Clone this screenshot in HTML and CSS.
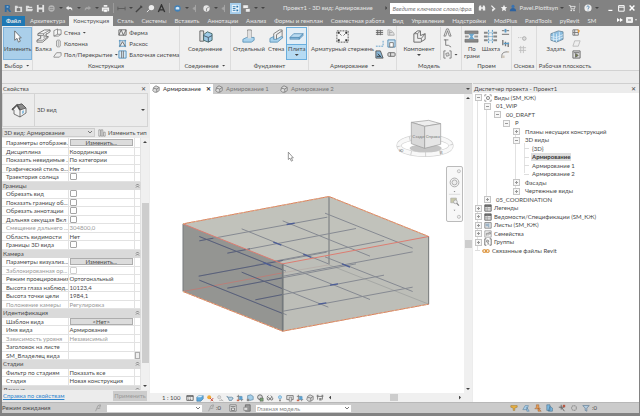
FILE: index.html
```
<!DOCTYPE html>
<html lang="ru">
<head>
    <meta charset="UTF-8">
    <meta name="viewport" content="width=device-width, initial-scale=1.0">
    <title>Проект1 - 3D вид: Армирование</title>
    <link rel="stylesheet" href="styles.css">
</head>
<body>
    <!-- icon set -->
    <svg class="defs" width="0" height="0">
        <symbol id="i-logo" viewBox="0 0 10 10"><path d="M2 1h5l1 2-1 2 2 4H7L5 6H4v3H2z" fill="#2e6ca4"/><path d="M4 2.500h2v1.500H4z" fill="#9cc6e8"/></symbol>
        <symbol id="i-home" viewBox="0 0 10 10"><path d="M1 2h3v1h5v6H1z" fill="#ddd"/><path d="M3 8V5l2-1 2 1v3z" fill="#777"/></symbol>
        <symbol id="i-open" viewBox="0 0 10 10"><path d="M1 2h3l1 1h3v2h1L8 8H1z" fill="#ddd"/><path d="M3 5h6" stroke="#888"/></symbol>
        <symbol id="i-save" viewBox="0 0 10 10"><path d="M1 1h8v8H1z" fill="#e4e4e4"/><path d="M3 1h4v3H3zM3 6h4v3H3z" fill="#777"/></symbol>
        <symbol id="i-sync" viewBox="0 0 10 10"><circle cx="5" cy="5" r="3.500" fill="#b5b5b5"/><path d="M3 4h4M3 6h4" stroke="#888"/></symbol>
        <symbol id="i-undo" viewBox="0 0 10 10"><path d="M4 2L1 4.500 4 7V5.500h2.500L8 7.500V5L6.500 3.500H4z" fill="#eee"/></symbol>
        <symbol id="i-redo" viewBox="0 0 10 10"><path d="M6 2l3 2.500L6 7V5.500H4L2 7.500V5l1.500-1.500H6z" fill="#a5a5a5"/></symbol>
        <symbol id="i-print" viewBox="0 0 10 10"><path d="M1 4h8v4H1zM3 1h4v2H3z" fill="#eee"/><path d="M3 6h4v3H3z" fill="#fff" stroke="#888" stroke-width=".5"/></symbol>
        <symbol id="i-dim" viewBox="0 0 10 10"><path d="M1 3v4M9 3v4M1 5h8" stroke="#5b5b5b" fill="none"/></symbol>
        <symbol id="i-line" viewBox="0 0 10 10"><path d="M1 9l6-6M6 2l2 2" stroke="#444" stroke-width="1.500"/></symbol>
        <symbol id="i-tag" viewBox="0 0 10 10"><circle cx="6" cy="4" r="3" fill="#eee"/><path d="M1 9l3-3" stroke="#eee"/></symbol>
        <symbol id="i-text" viewBox="0 0 10 10"><path d="M1.500 9L5 1l3.500 8M3 6.500h4" stroke="#333" stroke-width="1.500" fill="none"/></symbol>
        <symbol id="i-3d" viewBox="0 0 10 10"><circle cx="5" cy="5" r="3.500" fill="#3f81b9"/><path d="M3 6V4l2-1 2 1v2z" fill="#d8e9f6"/></symbol>
        <symbol id="i-sect" viewBox="0 0 10 10"><path d="M5 1v8M2 5l3-2v4z" stroke="#a5a5a5" fill="#a5a5a5"/></symbol>
        <symbol id="i-ball" viewBox="0 0 10 10"><circle cx="5" cy="5" r="3.500" fill="#e6e6e6"/><path d="M5 5L8 3M5 5v3" stroke="#888"/></symbol>
        <symbol id="i-thin" viewBox="0 0 10 10"><path d="M1 1h8v8H1z" fill="#e9f4fc"/><path d="M2 3h3M2 5h3M2 7h3" stroke="#2d76ae"/><path d="M6 2h2v2H6zM6 6h2v2H6z" fill="#2d76ae"/></symbol>
        <symbol id="i-wins" viewBox="0 0 10 10"><path d="M1 1h6v4H1zM4 5h5v4H4z" fill="#eee" stroke="#777" stroke-width=".6"/></symbol>
        <symbol id="i-bino" viewBox="0 0 10 10"><path d="M1 8V4l1-2h2v6zM6 8V2h2l1 2v4zM4 4h2v2H4z" fill="#eee"/></symbol>
        <symbol id="i-comm" viewBox="0 0 10 10"><path d="M3 2l4 4-3 1M4 9l3-3" stroke="#eee" stroke-width="1.500" fill="none"/></symbol>
        <symbol id="i-star" viewBox="0 0 10 10"><path d="M5 1l1.200 2.700 2.800.300-2.100 2 .600 3L5 7.500 2.500 9l.600-3L1 4l2.800-.300z" fill="#f2f2f2"/></symbol>
        <symbol id="i-user" viewBox="0 0 10 10"><circle cx="5" cy="3" r="2" fill="#3a73b0"/><path d="M1 9c0-3 2-4 4-4s4 1 4 4z" fill="#2c62a0"/></symbol>
        <symbol id="i-cart" viewBox="0 0 10 10"><path d="M1 2h2l1 4h4l1-3H3" fill="none" stroke="#eee"/><circle cx="4" cy="8" r="1" fill="#eee"/><circle cx="7.500" cy="8" r="1" fill="#eee"/></symbol>
        <symbol id="i-help" viewBox="0 0 10 10"><circle cx="5" cy="5" r="4.500" fill="#eee"/><path d="M3.500 4c0-2 3-2 3-.200C6.500 5 5 5 5 6.200M5 7v1" stroke="#3a73a5" fill="none"/></symbol>
        <symbol id="i-fold" viewBox="0 0 10 10"><path d="M2 5l3-3 3 3M2 9l3-3 3 3" stroke="#666" stroke-width="1.500" fill="none"/></symbol>

        <symbol id="b-arrow" viewBox="0 0 16 16"><path d="M5 2v10l2.500-2 1.500 4 2-1-1.500-3.500H12z" fill="#fff" stroke="#555" stroke-width=".8"/></symbol>
        <symbol id="b-beam" viewBox="0 0 16 16"><path d="M2 5l7-4h6v2l-3 2h-1v3h2v1l-6 5H1v-2l3-2h1V7H2z" fill="#f2f2f2" stroke="#666" stroke-width=".9"/><path d="M2 5h6l7-4M8 5v2H5M1 12h6l6-4" fill="none" stroke="#666" stroke-width=".7"/><path d="M8 7l3-2v3l-3 2z" fill="#aaa"/></symbol>
        <symbol id="b-joint" viewBox="0 0 16 16"><path d="M2 2h4v11H2z" fill="#ddd" stroke="#666"/><path d="M6 6l4-3 5 2v7l-4 2-5-2z" fill="#9cc9e6" stroke="#466"/><path d="M6 7l5 2 4-2M11 9v5" stroke="#456" fill="none"/></symbol>
        <symbol id="b-found" viewBox="0 0 16 16"><path d="M7 1h4v10H7z" fill="#e5e5e5" stroke="#777" stroke-width=".8"/><path d="M2 11l4-2h8v3l-3 2H2z" fill="#a9d2ec" stroke="#4c88b0" stroke-width=".8"/><path d="M7 2h4v8H7z" fill="#e0e0e0"/></symbol>
        <symbol id="b-wallf" viewBox="0 0 16 16"><path d="M5 5l6-4h3v8l-6 4H5z" fill="#eee" stroke="#666" stroke-width=".8"/><path d="M8 6l6-4M8 6v7" stroke="#777"/><path d="M1 10l4-2v3h3l5-3 2 1-6 5H1z" fill="#a9d2ec" stroke="#4c88b0" stroke-width=".8"/></symbol>
        <symbol id="b-slab" viewBox="0 0 16 16"><path d="M1 9l4-4h10l-4 4z" fill="#b9daf0" stroke="#4c88b0" stroke-width=".8"/><path d="M1 9h10v2H1zM11 9l4-4v2l-4 4z" fill="#7fb2d6" stroke="#4c88b0" stroke-width=".6"/></symbol>
        <symbol id="b-rebar" viewBox="0 0 16 16"><path d="M2 2h12v12H2z" fill="#f5f5f5" stroke="#555" stroke-dasharray="2 1"/><path d="M3 3h2v2H3zM11 3h2v2h-2zM3 11h2v2H3zM11 11h2v2h-2z" fill="#333"/><path d="M5 5l2 2M11 5L9 7" stroke="#777"/></symbol>
        <symbol id="b-comp" viewBox="0 0 16 16"><path d="M2 5l4-3h3v5l5-2v6l-5 3H2z" fill="#eee" stroke="#666"/><path d="M2 5h4v5h4v4M9 2L6 5M14 5l-4 5" stroke="#777" fill="none"/></symbol>
        <symbol id="b-face" viewBox="0 0 16 16"><path d="M1 2h14v3H1zM1 11h14v3H1z" fill="#888" stroke="#666" stroke-width=".6"/><path d="M1 8h4M11 8h4" stroke="#999" stroke-width="2"/><path d="M5 5h6L9 8l2 3H5l2-3z" fill="#6ba8d0"/></symbol>
        <symbol id="b-shaft" viewBox="0 0 16 16"><path d="M1 4h4M1 8h4M1 12h4M11 4h4M11 8h4M11 12h4" stroke="#888" stroke-width="2"/><path d="M6 1v14M10 1v14" stroke="#4f93c2" stroke-dasharray="2 1"/><path d="M6 4h4M6 8h4M6 12h4" stroke="#9bc5e0"/></symbol>
        <symbol id="b-plane" viewBox="0 0 16 16"><path d="M2 5l8-3 5 1v8l-7 3-6-2z" fill="#8dbfe1" stroke="#56748a" stroke-width=".7"/><path d="M2 8l6 1 7-3M2 10.500l6 1 7-3M5 4v9M8 5v9M11 3v9" stroke="#e5f2fa" stroke-width=".8" fill="none"/></symbol>

        <symbol id="s-wall" viewBox="0 0 10 10"><path d="M1 3l4-2v6l-4 2zM5 2h4v5L6 9H1M5 7h4" fill="#f4f4f4" stroke="#777" stroke-width=".8"/></symbol>
        <symbol id="s-col" viewBox="0 0 10 10"><path d="M4 2c0-1 4-1 4 0v6c0 1-4 1-4 0z" fill="#f4f4f4" stroke="#777" stroke-width=".8"/><path d="M6 2v6" stroke="#aaa"/></symbol>
        <symbol id="s-floor" viewBox="0 0 10 10"><path d="M1 7l3-4h5v3L7 8H1z" fill="#eee" stroke="#777" stroke-width=".8"/></symbol>
        <symbol id="s-truss" viewBox="0 0 10 10"><path d="M1 2h8M1 8h8M1 2v6M9 2v6M1 8l2.500-6L6 8l3-6" stroke="#666" fill="none"/></symbol>
        <symbol id="s-brace" viewBox="0 0 10 10"><path d="M2 1v8M8 1v8M1 2h8M1 8h8" stroke="#4e90bd" fill="none"/><path d="M2 8l3-5 3 5" stroke="#666" fill="none"/></symbol>
        <symbol id="s-bsys" viewBox="0 0 10 10"><path d="M1 1h8v8H1z" fill="#d5eaf8" stroke="#4e90bd"/><path d="M4 1v8M6 1v8" stroke="#777"/></symbol>
        <symbol id="s-area" viewBox="0 0 10 10"><path d="M1 3h8M1 5h8M1 7h8M3 2v6M6 2v6" stroke="#666"/></symbol>
        <symbol id="s-path" viewBox="0 0 10 10"><path d="M1 8h8V2" stroke="#5b9bc8" stroke-dasharray="2 1" fill="none"/></symbol>
        <symbol id="s-fab" viewBox="0 0 10 10"><path d="M1 1h5l3 8H1z" fill="#8ab8d8" stroke="#555"/><path d="M3 4l4 4M2 7h4" stroke="#333"/></symbol>
        <symbol id="s-sheet" viewBox="0 0 10 10"><path d="M1 2c4 0 7 3 7 6H1z" fill="#e4e4e4" stroke="#aaa"/><path d="M2 5h4M3 8V3" stroke="#aaa"/></symbol>
        <symbol id="s-cover" viewBox="0 0 10 10"><path d="M1 1h8v8H1z" fill="#cfe5f4" stroke="#5088b0"/><path d="M3 4h4v5H3z" fill="#fff" stroke="#777"/></symbol>
        <symbol id="s-coupl" viewBox="0 0 10 10"><rect x="1" y="3" width="8" height="4" rx="1" fill="#ddd" stroke="#666"/><path d="M4 3v4" stroke="#666"/></symbol>
        <symbol id="s-mtext" viewBox="0 0 10 10"><path d="M1 9l3-8 2 0 3 8H7L5 3 3 9z" fill="#f4f4f4" stroke="#666" stroke-width=".8"/></symbol>
        <symbol id="s-mline" viewBox="0 0 10 10"><path d="M1 1h2v6h3l3 2M2 1h4" stroke="#777" fill="none"/></symbol>
        <symbol id="s-mgrp" viewBox="0 0 10 10"><path d="M3 1H1v8h2M7 1h2v8H7" stroke="#777" fill="none"/><path d="M3 4l3-1 1 3-3 1z" stroke="#777" fill="#ddd" stroke-width=".8"/></symbol>
        <symbol id="s-opw" viewBox="0 0 10 10"><path d="M1 3h3M6 3h3M1 7h8" stroke="#666"/><path d="M4 1h2v4H4z" fill="#5a9bc8"/></symbol>
        <symbol id="s-opv" viewBox="0 0 10 10"><path d="M2 1v6M5 3v5M8 4v5" stroke="#777" stroke-width="1.500"/><path d="M3 5h6" stroke="#5a9bc8" stroke-width="1.500"/></symbol>
        <symbol id="s-dorm" viewBox="0 0 10 10"><path d="M1 9V6c0-3 3-4 7-4" stroke="#777" fill="none"/><path d="M1 6h3v3H1zM7 1h2v2H7z" fill="#d0c8bc"/></symbol>
        <symbol id="s-level" viewBox="0 0 10 10"><path d="M0 4h5" stroke="#bbb" stroke-dasharray="1 1"/><circle cx="7" cy="5" r="2" fill="#ddd" stroke="#aaa"/></symbol>
        <symbol id="s-grid" viewBox="0 0 10 10"><path d="M1 3h8M1 6h8M3 1v8M6 1v8" stroke="#c0c0c0"/></symbol>
        <symbol id="s-show" viewBox="0 0 10 10"><path d="M1 2h6v6H1zM3 2v6M1 5h6" fill="#eee" stroke="#777"/><path d="M6 1l3 2-2 3z" fill="#e59a3c"/></symbol>
        <symbol id="s-refp" viewBox="0 0 10 10"><path d="M3 2h6L7 8H1z" fill="#eee" stroke="#bbb"/></symbol>
        <symbol id="s-view" viewBox="0 0 10 10"><path d="M1 1h8v8H1z" fill="#ddd" stroke="#666"/><path d="M2 3h6M4 4l3 2-3 2z" fill="#7a8a3a" stroke="#666"/></symbol>

        <symbol id="i-house" viewBox="0 0 16 16"><path d="M1 7l5-4 5-1 4 4v5l-6 4-6-3V8z" fill="#f2f2f2" stroke="#555" stroke-width=".8"/><path d="M6 3l5-1 4 4-6 2z" fill="#8c8c8c" stroke="#555" stroke-width=".8"/><path d="M1 8l5-5 3 5" fill="none" stroke="#555" stroke-width="1.500"/><path d="M9 8v7" stroke="#555" stroke-width=".8"/><path d="M11 9l2-.700V11l-2 1z" fill="#8fc0e0"/></symbol>
        <symbol id="i-type" viewBox="0 0 10 10"><path d="M1 1h2v8H1zM4 1h2v8H4zM7 4h2v5H7z" fill="#eee" stroke="#777" stroke-width=".7"/></symbol>
        <symbol id="i-cube" viewBox="0 0 10 10"><path d="M2 3l3-2 4 2v4L6 9H3L1 7z" fill="#ddd" stroke="#777"/><path d="M2 4l4 1 3-2M6 5v4" stroke="#777" fill="none"/></symbol>
        <symbol id="i-views" viewBox="0 0 10 10"><path d="M1 3V1h2M7 1h2v2M9 7v2H7M3 9H1V7" stroke="#888" fill="none"/><circle cx="5" cy="5" r="2" fill="#eee" stroke="#777"/></symbol>
        <symbol id="i-table" viewBox="0 0 10 10"><path d="M1 1h8v8H1z" fill="#e4e4e4" stroke="#555"/><path d="M1 2.500h8" stroke="#555" stroke-width="2"/><path d="M1 6h8M4 2v7" stroke="#888" stroke-width=".7"/></symbol>
        <symbol id="i-sheet" viewBox="0 0 10 10"><path d="M1 2h8v7H1z" fill="#eee" stroke="#777"/><path d="M6 3v5M2 4h3M2 6h3" stroke="#5d87a8"/></symbol>
        <symbol id="i-fam" viewBox="0 0 10 10"><path d="M1 1h8v8H1z" fill="#f3f3f3" stroke="#999"/><path d="M3 7V4h2v3M6 3h2v2H6z" fill="none" stroke="#888"/></symbol>
        <symbol id="i-group" viewBox="0 0 10 10"><path d="M3 1H1v8h2M7 1h2v8H7" stroke="#555" fill="none"/><circle cx="4.500" cy="4" r="1.500" fill="#ccc" stroke="#666" stroke-width=".7"/><path d="M5 5l2 3H4z" fill="#999"/></symbol>
        <symbol id="i-link" viewBox="0 0 10 10"><rect x="1" y="3.500" width="4" height="3" rx="1.500" fill="none" stroke="#d98a2b" stroke-width="1.300"/><rect x="5" y="3.500" width="4" height="3" rx="1.500" fill="none" stroke="#d98a2b" stroke-width="1.300"/></symbol>
        <symbol id="v-scale" viewBox="0 0 10 10"><path d="M1 2h8v6H1z" fill="#eee" stroke="#555"/><path d="M1 3h8M3 5h1M5 5h1M3 7h1M5 7h1" stroke="#555"/></symbol>
        <symbol id="v-box" viewBox="0 0 10 10"><path d="M1 4l3-2h5v4L6 9H1z" fill="#5da9dc" stroke="#386f98" stroke-width=".7"/><path d="M1 4h5l3-2H4z" fill="#d9edf9"/></symbol>
        <symbol id="v-sun" viewBox="0 0 10 10"><circle cx="4" cy="4" r="2.500" fill="#f0a93a"/><path d="M5 5l4 4M9 5L6 9" stroke="#c54" stroke-width="1.200"/></symbol>
        <symbol id="v-shade" viewBox="0 0 10 10"><circle cx="4" cy="4" r="2" fill="#ddd" stroke="#bbb"/><path d="M4 8h5M6 6l3 3" stroke="#b5b5b5"/></symbol>
        <symbol id="v-tea" viewBox="0 0 10 10"><path d="M1 3l2 1h4l2 1-2 3H4L3 5z" fill="#bcd6e6" stroke="#4a7391" stroke-width=".8"/></symbol>
        <symbol id="v-crop" viewBox="0 0 10 10"><path d="M3 1v6h6M1 3h6v6" stroke="#777" fill="none"/><path d="M4 3h4v4H4z" fill="#5ba3d4"/><path d="M1 7h3v2H1z" fill="#cc6a50"/></symbol>
        <symbol id="v-region" viewBox="0 0 10 10"><path d="M2 2l4-1 3 2v4l-4 1-3-1z" fill="#a5cfe9" stroke="#56809c" stroke-width=".8"/><path d="M1 6h3v3H1z" fill="#888"/></symbol>
        <symbol id="v-lock" viewBox="0 0 10 10"><circle cx="5" cy="4" r="3" fill="#ddd" stroke="#555"/><path d="M5 5h4v4H5z" fill="#79a374" stroke="#555" stroke-width=".6"/></symbol>
        <symbol id="v-glass" viewBox="0 0 10 10"><circle cx="3" cy="6" r="1.500" fill="none" stroke="#555"/><circle cx="7" cy="6" r="1.500" fill="none" stroke="#555"/><path d="M1 4l2-2M8 4L6 2" stroke="#555"/></symbol>
        <symbol id="v-bulb" viewBox="0 0 10 10"><circle cx="5" cy="4" r="2" fill="#a9d6f2" stroke="#5a9bc5" stroke-width=".7"/><path d="M4 7h2v2H4z" fill="#777"/></symbol>
        <symbol id="v-prop" viewBox="0 0 10 10"><path d="M1 2h8v5H1z" fill="#eee" stroke="#666"/><path d="M4 4h3v5H4z" fill="#ddd" stroke="#666" stroke-width=".7"/></symbol>
        <symbol id="v-dist" viewBox="0 0 10 10"><path d="M1 3h8M2 2v5M8 2v5" stroke="#666" fill="none"/><path d="M1 1h2v2H1zM7 1h2v2H7zM4 5h3v3H4z" fill="#888"/></symbol>
        <symbol id="n-filter" viewBox="0 0 10 10"><path d="M1 2h8L6 5v4L4 8V5z" fill="#b8d2e6" stroke="#56728a" stroke-width=".8"/></symbol>
        <symbol id="n-select" viewBox="0 0 10 10"><path d="M1 2h8v2L6 5v3H4V5L1 4z" fill="#e8b040" stroke="#97712d" stroke-width=".6"/></symbol>
        <symbol id="n-under" viewBox="0 0 10 10"><path d="M1 7l3-5h4L6 7zM6 4l3 5H6z" fill="#a8cde8" stroke="#59809d" stroke-width=".7"/></symbol>
        <symbol id="n-pin" viewBox="0 0 10 10"><path d="M3 1h3v3l2 2H1l2-2zM5 5l4 4H5z" fill="#e59a50" stroke="#9a5c31" stroke-width=".6"/></symbol>
        <symbol id="n-face" viewBox="0 0 10 10"><path d="M1 1h4v7H1zM5 3l3 2v4H3z" fill="#7cb8e0" stroke="#486e88" stroke-width=".7"/></symbol>
        <symbol id="n-drag" viewBox="0 0 10 10"><path d="M1 4h7M4 1v6M5 5l3 4" stroke="#555"/><path d="M6 1h3v3H6z" fill="#b75742"/></symbol>
        <symbol id="n-gear" viewBox="0 0 10 10"><circle cx="5" cy="5" r="3" fill="none" stroke="#999" stroke-width="1.500" stroke-dasharray="2 .5"/></symbol>
        <symbol id="n-sets" viewBox="0 0 10 10"><path d="M1 1h8v8H1z" fill="#eee" stroke="#777"/><path d="M2 3h6M3 5h4v3H3z" fill="none" stroke="#666"/></symbol>
        <symbol id="n-opts" viewBox="0 0 10 10"><path d="M3 1h6v8H3z" fill="#999" stroke="#666"/><path d="M1 4h5v4H1z" fill="#ddd" stroke="#888"/></symbol>
        <symbol id="n-work" viewBox="0 0 10 10"><path d="M2 9l3-7 3-1v2L6 4M4 6l4-1" stroke="#999" fill="none"/></symbol>
    </svg>

    <header class="titlebar">
        <nav class="qat">
            <button aria-label="Revit"><svg><use href="#i-logo"/></svg></button>
            <button aria-label="Главная"><svg><use href="#i-home"/></svg></button>
            <button aria-label="Открыть"><svg><use href="#i-open"/></svg></button>
            <button aria-label="Сохранить"><svg><use href="#i-save"/></svg></button>
            <button aria-label="Синхронизация"><svg><use href="#i-sync"/></svg></button>
            <i class="caret"></i>
            <button aria-label="Отменить"><svg><use href="#i-undo"/></svg></button>
            <i class="caret"></i>
            <button aria-label="Повторить"><svg><use href="#i-redo"/></svg></button>
            <i class="caret"></i>
            <button aria-label="Печать"><svg><use href="#i-print"/></svg></button>
            <i class="bar"></i>
            <button aria-label="Измерить"><svg><use href="#i-dim"/></svg></button>
            <i class="caret"></i>
            <button aria-label="Размер"><svg><use href="#i-line"/></svg></button>
            <button aria-label="Марка"><svg><use href="#i-tag"/></svg></button>
            <button aria-label="Текст"><svg><use href="#i-text"/></svg></button>
            <i class="bar"></i>
            <button aria-label="3D вид"><svg><use href="#i-3d"/></svg></button>
            <i class="caret"></i>
            <button aria-label="Разрез"><svg><use href="#i-sect"/></svg></button>
            <button aria-label="Рендер"><svg><use href="#i-ball"/></svg></button>
            <i class="caret"></i>
            <button aria-label="Вид"><svg><use href="#i-sect"/></svg></button>
            <button class="on" aria-label="Тонкие линии"><svg><use href="#i-thin"/></svg></button>
            <button aria-label="Окна"><svg><use href="#i-wins"/></svg></button>
            <i class="caret"></i>
            <i class="caret"></i>
        </nav>
        <h1>Проект1 - 3D вид: Армирование</h1>
        <div class="account">
            <i class="next"></i>
            <input type="text" class="search" placeholder="Введите ключевое слово/фразу" aria-label="Поиск">
            <button aria-label="Найти"><svg><use href="#i-bino"/></svg></button>
            <button aria-label="Связь"><svg><use href="#i-comm"/></svg></button>
            <button aria-label="Избранное"><svg><use href="#i-star"/></svg></button>
            <button class="user"><svg><use href="#i-user"/></svg>Pavel.Plotitsyn</button>
            <i class="caret"></i>
            <button aria-label="Магазин"><svg><use href="#i-cart"/></svg></button>
            <i class="bar"></i>
            <button aria-label="Справка"><svg><use href="#i-help"/></svg></button>
            <i class="caret"></i>
        </div>
        <div class="winbtns">
            <button aria-label="Свернуть"><svg viewBox="0 0 10 10"><path d="M3 8h5" stroke="#fff" stroke-width="1.500"/></svg></button>
            <button aria-label="Развернуть"><svg viewBox="0 0 10 10"><path d="M2 2h7v7H2zM2 4h7" stroke="#fff" stroke-width="1.200" fill="none"/></svg></button>
            <button aria-label="Закрыть"><svg viewBox="0 0 10 10"><path d="M2 2l6 6M8 2L2 8" stroke="#fff" stroke-width="1.800"/></svg></button>
        </div>
    </header>

    <nav class="tabs">
        <a class="file" href="#">Файл</a>
        <a href="#">Архитектура</a>
        <a class="active" href="#">Конструкция</a>
        <a href="#">Сталь</a>
        <a href="#">Системы</a>
        <a href="#">Вставить</a>
        <a href="#">Аннотации</a>
        <a href="#">Анализ</a>
        <a href="#">Формы и генплан</a>
        <a href="#">Совместная работа</a>
        <a href="#">Вид</a>
        <a href="#">Управление</a>
        <a href="#">Надстройки</a>
        <a href="#">ModPlus</a>
        <a href="#">PandTools</a>
        <a href="#">pyRevit</a>
        <a href="#">SM</a>
        <span class="more"><svg viewBox="0 0 20 8"><path d="M0 2l3 2-3 2zM3 2l3 2-3 2z" fill="#fff"/><rect x="9" y="1" width="7" height="6" rx="1" fill="#eee"/><path d="M11 4h3" stroke="#777"/><path d="M18 3h2l-1 2z" fill="#ddd"/></svg></span>
    </nav>

    <section class="ribbon">
        <div class="panel w-select">
            <div class="tools"><button class="big on"><svg><use href="#b-arrow"/></svg>Изменить</button></div>
            <h2>Выбор <i class="caret"></i></h2>
        </div>
        <div class="panel w-struct">
            <div class="tools">
                <button class="big"><svg><use href="#b-beam"/></svg>Балка</button>
                <div class="stack wide">
                    <button><svg><use href="#s-wall"/></svg>Стена <i class="caret"></i></button>
                    <button><svg><use href="#s-col"/></svg>Колонна</button>
                    <button><svg><use href="#s-floor"/></svg>Пол/Перекрытие <i class="caret"></i></button>
                </div>
                <div class="stack">
                    <button><svg><use href="#s-truss"/></svg>Ферма</button>
                    <button><svg><use href="#s-brace"/></svg>Раскос</button>
                    <button><svg><use href="#s-bsys"/></svg>Балочная система</button>
                </div>
            </div>
            <h2>Конструкция</h2>
        </div>
        <div class="panel w-joint">
            <div class="tools"><button class="big"><svg><use href="#b-joint"/></svg>Соединение</button></div>
            <h2>Соединение <i class="caret"></i></h2>
        </div>
        <div class="panel w-found">
            <div class="tools">
                <button class="big"><svg><use href="#b-found"/></svg>Отдельный</button>
                <button class="big"><svg><use href="#b-wallf"/></svg>Стена</button>
                <button class="big split"><svg><use href="#b-slab"/></svg>Плита<i class="caret"></i></button>
            </div>
            <h2>Фундамент</h2>
        </div>
        <div class="panel w-rebar">
            <div class="tools">
                <button class="big"><svg><use href="#b-rebar"/></svg>Арматурный стержень</button>
                <div class="stack">
                    <button aria-label="По площади"><svg><use href="#s-area"/></svg></button>
                    <button aria-label="По траектории"><svg><use href="#s-path"/></svg></button>
                    <button aria-label="Сетка"><svg><use href="#s-fab"/></svg></button>
                </div>
                <div class="stack">
                    <button aria-label="Лист"><svg><use href="#s-sheet"/></svg></button>
                    <button aria-label="Защитный слой"><svg><use href="#s-cover"/></svg></button>
                    <button aria-label="Муфта"><svg><use href="#s-coupl"/></svg></button>
                </div>
            </div>
            <h2>Армирование <i class="caret"></i></h2>
        </div>
        <div class="panel w-model">
            <div class="tools">
                <button class="big"><svg><use href="#b-comp"/></svg>Компонент<i class="caret"></i></button>
                <div class="stack ruled">
                    <button aria-label="Текст модели"><svg><use href="#s-mtext"/></svg></button>
                    <button aria-label="Линия модели"><svg><use href="#s-mline"/></svg></button>
                    <button aria-label="Группа модели"><svg><use href="#s-mgrp"/></svg><i class="caret"></i></button>
                </div>
            </div>
            <h2>Модель</h2>
        </div>
        <div class="panel w-open">
            <div class="tools">
                <button class="big"><svg><use href="#b-face"/></svg>По<br>грани</button>
                <button class="big"><svg><use href="#b-shaft"/></svg>Шахта</button>
                <div class="stack">
                    <button aria-label="Стена"><svg><use href="#s-opw"/></svg></button>
                    <button aria-label="Вертикальный"><svg><use href="#s-opv"/></svg></button>
                    <button aria-label="Слуховое окно"><svg><use href="#s-dorm"/></svg></button>
                </div>
            </div>
            <h2>Проем</h2>
        </div>
        <div class="panel w-datum">
            <div class="tools">
                <div class="stack">
                    <button aria-label="Уровень"><svg><use href="#s-level"/></svg></button>
                    <button aria-label="Ось"><svg><use href="#s-grid"/></svg></button>
                </div>
            </div>
            <h2>Основа</h2>
        </div>
        <div class="panel w-plane">
            <div class="tools">
                <button class="big"><svg><use href="#b-plane"/></svg>Задать</button>
                <div class="stack">
                    <button aria-label="Показать"><svg><use href="#s-show"/></svg></button>
                    <button aria-label="Опорная плоскость"><svg><use href="#s-refp"/></svg></button>
                    <button aria-label="Просмотр"><svg><use href="#s-view"/></svg></button>
                </div>
            </div>
            <h2>Рабочая плоскость</h2>
        </div>
    </section>

    <main>
        <aside class="props">
            <div class="head">Свойства <button aria-label="Закрыть">✕</button></div>
            <div class="preview">
                <div class="thumb"><svg><use href="#i-house"/></svg></div>
                <span>3D вид</span>
                <i class="caret"></i>
            </div>
            <div class="type">
                <select aria-label="Тип"><option>3D вид: Армирование</option></select>
                <button><svg><use href="#i-type"/></svg>Изменить тип</button>
            </div>
            <div class="scroller">
                <table>
                    <tr><th>Параметры отображе...</th><td><button>Изменить...</button></td><td></td></tr>
                    <tr><th>Дисциплина</th><td>Координация</td><td></td></tr>
                    <tr><th>Показать невидимые ...</th><td>По категории</td><td></td></tr>
                    <tr><th>Графический стиль о...</th><td>Нет</td><td></td></tr>
                    <tr><th>Траектория солнца</th><td><input type="checkbox" aria-label="Траектория солнца"></td><td></td></tr>
                    <tr class="group"><th colspan="2">Границы</th><td><svg><use href="#i-fold"/></svg></td></tr>
                    <tr><th>Обрезать вид</th><td><input type="checkbox" aria-label="Обрезать вид"></td><td></td></tr>
                    <tr><th>Показать границу об...</th><td><input type="checkbox" aria-label="Показать границу обрезки"></td><td></td></tr>
                    <tr><th>Обрезать аннотации</th><td><input type="checkbox" aria-label="Обрезать аннотации"></td><td></td></tr>
                    <tr><th>Дальняя секущая Вкл</th><td><input type="checkbox" aria-label="Дальняя секущая Вкл"></td><td></td></tr>
                    <tr class="off"><th>Смещение дальнего ...</th><td>304800,0</td><td></td></tr>
                    <tr><th>Область видимости</th><td>Нет</td><td></td></tr>
                    <tr><th>Границы 3D вида</th><td><input type="checkbox" aria-label="Границы 3D вида"></td><td></td></tr>
                    <tr class="group"><th colspan="2">Камера</th><td><svg><use href="#i-fold"/></svg></td></tr>
                    <tr><th>Параметры визуализ...</th><td><button>Изменить...</button></td><td></td></tr>
                    <tr class="off"><th>Заблокированная ор...</th><td><input type="checkbox" disabled aria-label="Заблокированная ориентация"></td><td></td></tr>
                    <tr><th>Режим проецирования</th><td>Ортогональный</td><td></td></tr>
                    <tr><th>Высота глаза наблюд...</th><td>10123,4</td><td></td></tr>
                    <tr><th>Высота точки цели</th><td>1984,1</td><td></td></tr>
                    <tr class="off"><th>Положение камеры</th><td>Регулировка</td><td></td></tr>
                    <tr class="group"><th colspan="2">Идентификация</th><td><svg><use href="#i-fold"/></svg></td></tr>
                    <tr><th>Шаблон вида</th><td><button>&lt;Нет&gt;</button></td><td></td></tr>
                    <tr><th>Имя вида</th><td>Армирование</td><td></td></tr>
                    <tr class="off"><th>Зависимость уровня</th><td>Независимый</td><td></td></tr>
                    <tr><th>Заголовок на листе</th><td></td><td></td></tr>
                    <tr><th>SM_Владелец вида</th><td></td><td class="assoc"><button aria-label="Связать"></button></td></tr>
                    <tr class="group"><th colspan="2">Стадии</th><td><svg><use href="#i-fold"/></svg></td></tr>
                    <tr><th>Фильтр по стадиям</th><td>Показать все</td><td></td></tr>
                    <tr><th>Стадия</th><td>Новая конструкция</td><td></td></tr>
                    <tr class="group"><th colspan="2">Данные</th><td><svg><use href="#i-fold"/></svg></td></tr>
                </table>
                <div class="vbar"><i class="up"></i><b class="thumb-props"></b><i class="down"></i></div>
            </div>
            <div class="foot"><a href="#">Справка по свойствам</a><button disabled>Применить</button></div>
        </aside>

        <section class="view">
            <div class="viewtabs">
                <a class="active" href="#"><svg><use href="#i-cube"/></svg>Армирование<b>✕</b></a>
                <a href="#"><svg><use href="#i-cube"/></svg>Армирование 1</a>
                <a href="#"><svg><use href="#i-cube"/></svg>Армирование 2</a>
                <i class="caret"></i>
            </div>
            <div class="stage">
                <div class="canvas">
                    <svg class="model" viewBox="0 0 942 900" preserveAspectRatio="xMidYMid slice">
                        <g transform="translate(0 273)" fill="none">
                            <path d="M99 118L537 36 836 156V359L398 440 99 321z" fill="#c1c2bb"/>
                            <path d="M398 238L836 156V359L398 440z" fill="#bdbeb8"/>
                            <path d="M99 118L398 238V440L99 321z" fill="#949592"/>
                            <!-- hidden edges -->
                            <path d="M537 36V241" stroke="#86898a" stroke-width="4"/>
                            <path d="M537 241L836 359" stroke="#a6a8a5" stroke-width="3"/>
                            <path d="M99 321L398 265" stroke="#b97f79" stroke-width="3"/>
                            <path d="M398 265L537 241" stroke="#b5a8a3" stroke-width="2"/>
                            <!-- rebar mesh -->
                            <g stroke="#868a92" stroke-width="3">
                                <path d="M148 169L532 98M232 206L618 132M316 241L702 168M400 275L788 202"/>
                                <path d="M148 156L408 260M275 133L535 238M398 109L660 215M525 86L788 191"/>
                                <path d="M146 275L530 203M232 311L618 238M316 346L702 272M400 380L788 308"/>
                                <path d="M148 287L410 391M275 263L535 368M398 240L660 345M525 217L788 321"/>
                            </g>
                            <g stroke="#596079" stroke-width="3">
                                <path d="M148 156L398 256M146 275L398 228M148 287L398 387M232 311L398 280M316 346L398 330M232 206L300 193M148 169L190 161M275 263L398 313"/>
                            </g>
                            <path d="M410 120l24-4M370 173l24 9M460 209l24 10M576 238l24 10M540 302l24-4M505 359l24-4M340 234l24 10" stroke="#4c5d96" stroke-width="4"/>
                            <!-- outline -->
                            <path d="M398 238V440M836 156V359M99 118V321" stroke="#777b7c" stroke-width="3"/>
                            <path d="M398 238V440" stroke="#74797c" stroke-width="5"/>
                            <path d="M99 118L398 238 836 156" stroke="#dc7d72" stroke-width="3"/>
                            <path d="M99 118L537 36 836 156M99 321L398 440 836 359" stroke="#dc7d60" stroke-width="3"/>
                            <path d="M99 118L537 36 836 156M99 321L398 440 836 359" stroke="#e0b488" stroke-width="3" stroke-dasharray="6 6"/>
                        </g>
                        <path d="M415 176v22l5-4 4 9 4-2-4-8h6z" fill="#fff" stroke="#666" stroke-width="2"/>
                    </svg>
                    <svg class="cube" viewBox="0 0 174 120">
                        <ellipse cx="87" cy="80" rx="78" ry="26" fill="none" stroke="#d2d2d2" stroke-width="16"/>
                        <ellipse cx="87" cy="80" rx="78" ry="26" fill="none" stroke="#f8f8f8" stroke-width="12" stroke-dasharray="40 3"/>
                        <ellipse cx="89" cy="88" rx="48" ry="12" fill="#c4c4c4"/>
                        <path d="M46 10L98 4 134 14 86 22z" fill="#eee" stroke="#999" stroke-width="2"/>
                        <path d="M46 10L86 22V88L46 74z" fill="#d9d9d9" stroke="#999" stroke-width="2"/>
                        <path d="M86 22L134 14V76L86 88z" fill="#e6e6e6" stroke="#999" stroke-width="2"/>
                        <text x="49" y="57" font-size="13">Сзади</text>
                        <text x="89" y="56" font-size="13">Справа</text>
                        <text x="10" y="99" font-size="12">Ю</text>
                        <text x="132" y="104" font-size="12">В</text>
                    </svg>
                    <div class="navbar">
                        <svg viewBox="0 0 48 162">
                            <circle cx="38" cy="8" r="5" fill="#eee" stroke="#aaa" stroke-width="2"/>
                            <circle cx="24" cy="44" r="14" fill="#f6f6f6" stroke="#aaa" stroke-width="3"/>
                            <circle cx="24" cy="44" r="8" fill="#eee" stroke="#aaa" stroke-width="3"/>
                            <path d="M21 71h6l-3 4zM21 131h6l-3 4z" fill="#888"/>
                            <path d="M6 82h36" stroke="#ccc" stroke-width="2"/>
                            <path d="M12 94h18v15H12z" fill="#c9c9a8" stroke="#aaa" stroke-width="2"/>
                            <circle cx="27" cy="106" r="6" fill="#eee" stroke="#999" stroke-width="2"/>
                            <path d="M31 110l7 8" stroke="#888" stroke-width="4"/>
                            <circle cx="38" cy="154" r="5" fill="#eee" stroke="#aaa" stroke-width="2"/>
                        </svg>
                    </div>
                </div>
                <div class="vbar"><i class="up"></i><b class="thumb-view"></b><i class="down"></i></div>
            </div>
            <div class="viewbar">
                <span>1 : 100</span>
                <button aria-label="Масштаб"><svg><use href="#v-scale"/></svg></button>
                <button aria-label="Визуальный стиль"><svg><use href="#v-box"/></svg></button>
                <button aria-label="Солнце"><svg><use href="#v-sun"/></svg></button>
                <button aria-label="Тени"><svg><use href="#v-shade"/></svg></button>
                <button aria-label="Визуализация"><svg><use href="#v-tea"/></svg></button>
                <button aria-label="Обрезать"><svg><use href="#v-crop"/></svg></button>
                <button aria-label="Граница"><svg><use href="#v-region"/></svg></button>
                <button aria-label="Заблокировать"><svg><use href="#v-lock"/></svg></button>
                <button aria-label="Скрыть"><svg><use href="#v-glass"/></svg></button>
                <button aria-label="Показать"><svg><use href="#v-bulb"/></svg></button>
                <button aria-label="Свойства вида"><svg><use href="#v-prop"/></svg></button>
                <button aria-label="Аналитика"><svg><use href="#v-crop"/></svg></button>
                <button aria-label="Смещение"><svg><use href="#i-cube"/></svg></button>
                <button aria-label="Зависимости"><svg><use href="#v-dist"/></svg></button>
                <i class="prev"></i>
                <b class="hthumb"></b>
                <i class="next"></i>
            </div>
        </section>

        <aside class="browser">
            <div class="head">Диспетчер проекта - Проект1 <button aria-label="Закрыть">✕</button></div>
            <ul class="tree">
                <li class="l0 minus"><svg><use href="#i-views"/></svg>Виды (SM_КЖ)</li>
                <li class="l1 minus">01_WIP</li>
                <li class="l2 minus">00_DRAFT</li>
                <li class="l3 minus">Р</li>
                <li class="l4 plus">Планы несущих конструкций</li>
                <li class="l4 minus">3D виды</li>
                <li class="l5">{3D}</li>
                <li class="l5"><b>Армирование</b></li>
                <li class="l5">Армирование 1</li>
                <li class="l5">Армирование 2</li>
                <li class="l4 plus">Фасады</li>
                <li class="l4 plus">Чертежные виды</li>
                <li class="l1 plus">05_COORDINATION</li>
                <li class="l0 plus"><svg><use href="#i-table"/></svg>Легенды</li>
                <li class="l0 plus"><svg><use href="#i-table"/></svg>Ведомости/Спецификации (SM_КЖ)</li>
                <li class="l0 plus"><svg><use href="#i-sheet"/></svg>Листы (SM_КЖ)</li>
                <li class="l0 plus"><svg><use href="#i-fam"/></svg>Семейства</li>
                <li class="l0 plus"><svg><use href="#i-group"/></svg>Группы</li>
                <li class="l0"><svg><use href="#i-link"/></svg>Связанные файлы Revit</li>
            </ul>
        </aside>
    </main>

    <footer class="status">
        <span class="mode">Режим ожидания</span>
        <svg><use href="#n-work"/></svg>
        <select class="sets" aria-label="Рабочий набор"><option></option></select>
        <svg><use href="#n-work"/></svg>
        <span class="count">:0</span>
        <svg><use href="#n-sets"/></svg>
        <svg><use href="#n-opts"/></svg>
        <select class="option" aria-label="Вариант"><option>Главная модель</option></select>
        <div class="picks">
            <button aria-label="Связи"><svg><use href="#n-select"/></svg></button>
            <button aria-label="Подложка"><svg><use href="#n-under"/></svg></button>
            <button aria-label="Прикрепленные"><svg><use href="#n-pin"/></svg></button>
            <button aria-label="По грани"><svg><use href="#n-face"/></svg></button>
            <button aria-label="Перетаскивание"><svg><use href="#n-drag"/></svg></button>
            <button aria-label="Процессы"><svg><use href="#n-gear"/></svg></button>
            <button aria-label="Фильтр"><svg><use href="#n-filter"/></svg></button>
            <span>:0</span>
        </div>
    </footer>
</body>
</html>
```
FILE: styles.css
```
* {
    box-sizing: border-box;
}

body {
    margin: 0;
    height: 100vh;
    display: flex;
    flex-direction: column;
    overflow: hidden;
    padding: 0 1px 3px 2px;
    background: #828282;
    color: #4a4a4a;
    font-family: Lato, "Open Sans", sans-serif;
    font-size: 6px;
    line-height: 8px;
    white-space: nowrap;
}

.defs {
    position: absolute;
}

button, input, select {
    font: inherit;
    color: inherit;
    margin: 0;
    padding: 0;
    border: 0;
    background: none;
}

button {
    display: flex;
    align-items: center;
    justify-content: center;
}

svg {
    width: 10px;
    height: 10px;
    flex: none;
}

a {
    color: inherit;
    text-decoration: none;
}

h1, h2 {
    margin: 0;
    font-size: 6px;
    font-weight: normal;
}

/* little arrows */
.caret, .up, .down, .next, .prev {
    flex: none;
    display: block;
    width: 4px;
    height: 2px;
    background: #444;
    clip-path: polygon(0 0, 100% 0, 50% 100%);
}

.up {
    clip-path: polygon(50% 0, 100% 100%, 0 100%);
}

.next, .prev {
    width: 2px;
    height: 4px;
    clip-path: polygon(0 0, 100% 50%, 0 100%);
}

.prev {
    clip-path: polygon(100% 0, 100% 100%, 0 50%);
}

.bar {
    width: 1px;
    height: 10px;
    margin: 0 2px;
    background: #9a9a9a;
}

/* title bar */
.titlebar {
    flex: none;
    height: 16px;
    display: flex;
    align-items: center;
    color: #e8e8e8;
}

.qat {
    display: flex;
    align-items: center;
    width: 277px;
}

.qat button {
    width: 11px;
    height: 11px;
}

.qat svg {
    width: 9px;
    height: 9px;
}

.qat .caret {
    margin: 0 1px 0 2px;
}

.qat .on {
    background: #a5cdeb;
}

.titlebar h1 {
    flex: 1;
    padding-left: 4px;
}

.account {
    display: flex;
    align-items: center;
}

.account button {
    min-width: 11px;
}

.account .caret {
    margin: 0 2px;
}

.account svg {
    width: 8px;
    height: 8px;
}

.account .user {
    gap: 2px;
}

.search {
    width: 84px;
    height: 11px;
    margin: 0 2px 0 3px;
    padding: 0 2px;
    background: #fff;
    font-style: italic;
}

.search::placeholder {
    color: #777;
}

.winbtns {
    display: flex;
    gap: 1px;
    padding: 0 2px 0 4px;
}

.winbtns svg {
    width: 10px;
    height: 8px;
}

/* ribbon tabs */
.tabs {
    flex: none;
    height: 10px;
    display: flex;
    color: #e8e8e8;
    line-height: 10px;
}

.tabs a {
    padding: 0 4px;
}

.tabs .file {
    margin-right: 1px;
    background: #1f78b4;
    font-weight: bold;
}

.tabs .active {
    background: #f2f2f2;
    color: #555;
}

.more {
    margin-left: auto;
    padding-right: 2px;
}

.more svg {
    width: 20px;
    height: 8px;
}

/* ribbon */
.ribbon {
    flex: none;
    display: flex;
    height: 45px;
    background: #f0f0f0;
    border-bottom: 1px solid #d2d2d2;
}

.panel {
    display: flex;
    flex-direction: column;
    border-right: 1px solid #dcdcdc;
}

.tools {
    flex: 1;
    display: flex;
    padding: 1px;
}

.panel h2 {
    display: flex;
    align-items: center;
    justify-content: center;
    gap: 3px;
    height: 9px;
}

.w-select { width: 31px; }
.w-struct { width: 147px; }
.w-joint { width: 51px; }
.w-found { width: 78px; }
.w-rebar { width: 88px; }
.w-model { width: 65px; }
.w-open { width: 50px; }
.w-datum { width: 25px; }

.w-plane {
    width: 56px;
    border-right: 0;
}

.w-plane .tools {
    padding: 1px 9px 1px 3px;
}

.big {
    flex: 1;
    flex-direction: column;
    justify-content: flex-start;
    padding-top: 1px;
    border: 1px solid transparent;
    line-height: 7px;
}

.big svg {
    width: 15px;
    height: 15px;
    margin-bottom: 1px;
}

.big .caret {
    margin-top: 2px;
}

.big.on {
    background: #aacfea;
    border-color: #7fb3dc;
}

.big.split {
    background: linear-gradient(#e3eef6 16px, #6aaedd 16px, #6aaedd 17px, #b6dbf3 17px);
    border-color: #6aaedd;
}

.stack {
    display: flex;
    flex-direction: column;
    justify-content: center;
}

.stack button {
    height: 11px;
    min-width: 12px;
    gap: 2px;
    justify-content: flex-start;
}

.stack svg {
    width: 9px;
    height: 9px;
}

.stack.wide {
    width: 66px;
}

.w-struct .big {
    flex: none;
    width: 19px;
}

.stack.ruled {
    border-left: 1px solid #d6d6d6;
    padding-left: 2px;
    width: 20px;
}

.w-datum .tools {
    justify-content: center;
}

/* work area */
main {
    flex: 1;
    min-height: 0;
    display: grid;
    grid-template-columns: 147px 1fr 166px;
    gap: 1px;
    padding-top: 12px;
    background: #ececec;
}

aside, .view {
    display: flex;
    flex-direction: column;
    min-width: 0;
    min-height: 0;
}

.head {
    flex: none;
    display: flex;
    justify-content: space-between;
    align-items: center;
    height: 10px;
    padding: 0 3px 0 1px;
    border-top: 1px solid #cfcfcf;
}

.preview {
    flex: none;
    height: 34px;
    display: flex;
    align-items: center;
    gap: 2px;
    border: 1px solid #d4d4d4;
    margin-right: 1px;
    padding-right: 2px;
}

.thumb {
    width: 32px;
    height: 32px;
    display: grid;
    place-items: center;
    border-right: 1px solid #d4d4d4;
}

.thumb svg {
    width: 16px;
    height: 16px;
}

.preview .caret {
    margin-left: auto;
}

.type {
    flex: none;
    display: flex;
    align-items: center;
    gap: 3px;
    height: 11px;
}

select {
    appearance: none;
    background: #e2e2e2 url("data:image/svg+xml,%3Csvg xmlns='http://www.w3.org/2000/svg' viewBox='0 0 4 3'%3E%3Cpath d='M0 0l2 2 2-2' fill='none' stroke='%23777'/%3E%3C/svg%3E") no-repeat right 2px center / 4px 3px;
    border: 1px solid #ccc;
}

.type select {
    width: 93px;
    height: 9px;
    padding-left: 1px;
}

.type button {
    gap: 2px;
}

.type svg {
    width: 8px;
    height: 8px;
}

.scroller, .stage {
    flex: 1;
    min-height: 0;
    display: flex;
    overflow: hidden;
}

.props table {
    flex: 1;
    width: 100%;
    align-self: flex-start;
    table-layout: fixed;
    border-collapse: collapse;
    background: #fff;
    line-height: 7px;
}

.props tr {
    height: 8px;
}

.props tr:nth-child(odd) {
    height: 9px;
}

.props th, .props td {
    padding: 0 1px;
    border: 1px solid #e2e2e2;
    border-width: 0 1px 1px 0;
    text-align: left;
    font-weight: normal;
    overflow: hidden;
}

.props th {
    padding: 0 0 0 4px;
}

.props th:first-child {
    width: 66px;
}

.props td:last-child {
    width: 6px;
    padding: 0;
}

.props td svg {
    display: block;
    width: 5px;
    height: 5px;
}

.props .group th {
    padding-left: 1px;
}

.props .group > * {
    background: #dadada;
    border-color: #dadada;
}

.props .off {
    color: #9a9a9a;
}

.props td button {
    width: 100%;
    height: 7px;
    background: #dcdcdc;
    border: 1px solid #adadad;
    line-height: 5px;
}

.props .assoc button {
    background: #eee;
}

.props input {
    display: block;
    appearance: none;
    width: 7px;
    height: 7px;
    background: #fff;
    border: 1px solid #a5a5a5;
    border-radius: 1px;
}

.props input:disabled {
    border-color: #d0d0d0;
}

.vbar {
    flex: none;
    width: 8px;
    display: flex;
    flex-direction: column;
    align-items: center;
    padding: 3px 0;
    background: #f0f0f0;
}

.vbar b {
    width: 7px;
    background: #cdcdcd;
}

.vbar .down {
    margin-top: auto;
}

.thumb-props {
    flex: 0 0 65%;
    margin-top: 60px;
}

.thumb-view {
    flex: 0 0 8px;
    margin-top: 141px;
}

.foot {
    flex: none;
    display: flex;
    align-items: center;
    justify-content: space-between;
    height: 12px;
    padding: 0 2px 0 1px;
}

.foot a {
    color: #2f86cf;
    text-decoration: underline;
}

.foot button {
    width: 34px;
    height: 10px;
    background: #ccc;
    color: #999;
}

/* 3D view */
.viewtabs {
    flex: none;
    display: flex;
    align-items: center;
    height: 11px;
    background: #cacaca;
    border-top: 1px solid #bdbdbd;
    color: #777;
}

.viewtabs a {
    display: flex;
    align-items: center;
    gap: 3px;
    width: 65px;
    height: 10px;
    padding-left: 2px;
}

.viewtabs a.active {
    width: 63px;
    background: #fff;
    color: #333;
}

.viewtabs a.active b {
    margin-left: auto;
    padding-right: 2px;
}

.viewtabs svg {
    width: 8px;
    height: 8px;
}

.viewtabs .caret {
    margin: 0 2px 0 auto;
}

.canvas {
    flex: 1;
    position: relative;
    background: #fff;
}

.model {
    display: block;
    width: 100%;
    height: 100%;
}

.cube {
    position: absolute;
    top: 25px;
    right: 10px;
    width: 58px;
    height: 40px;
    fill: #777;
}

.navbar {
    position: absolute;
    top: 72px;
    right: 1px;
    width: 17px;
    height: 56px;
    border: 1px solid #bbb;
    border-radius: 2px;
    background: #f8f8f8;
}

.navbar svg {
    display: block;
    width: 15px;
    height: 54px;
}

.viewbar {
    flex: none;
    display: flex;
    align-items: center;
    height: 9px;
    padding-left: 12px;
    background: #f0f0f0;
}

.viewbar span {
    width: 23px;
}

.viewbar button {
    width: 10px;
}

.viewbar svg, .status svg {
    width: 8px;
    height: 8px;
}

.viewbar .prev {
    margin-left: 4px;
}

.hthumb {
    width: 8px;
    height: 7px;
    margin-left: 59px;
    background: #cdcdcd;
}

.viewbar .next {
    margin: 0 11px 0 auto;
}

/* project browser */
.tree {
    flex: 1;
    margin: 0;
    padding: 0 0 0 1px;
    /* guide lines between the levels */
    background:
        linear-gradient(#e2e2e2, #e2e2e2) 4px 4px / 1px 153px no-repeat,
        linear-gradient(#e2e2e2, #e2e2e2) 13px 12px / 1px 94px no-repeat,
        linear-gradient(#e2e2e2, #e2e2e2) 42px 38px / 1px 60px no-repeat,
        linear-gradient(#e2e2e2, #e2e2e2) 51px 50px / 1px 30px no-repeat,
        #fff;
    list-style: none;
}

.tree li {
    display: flex;
    align-items: center;
    gap: 5px;
    height: 8px;
}

.tree li:nth-child(odd) {
    height: 9px;
}

.tree li::before {
    content: "";
    flex: none;
    width: 5px;
    height: 1px;
    background: #ddd;
}

.tree .minus::before, .tree .plus::before {
    height: 5px;
    border: 1px solid #c5c5c5;
    background: linear-gradient(#999, #999) center / 3px 1px no-repeat, #f6f6f6;
}

.tree .plus::before {
    background:
        linear-gradient(#999, #999) center / 3px 1px no-repeat,
        linear-gradient(#999, #999) center / 1px 3px no-repeat,
        #f6f6f6;
}

.tree svg {
    width: 8px;
    height: 8px;
}

.tree b {
    margin-left: -1px;
    padding: 0 1px;
    background: #dedede;
    color: #333;
}

.tree .l0 {
    padding-left: 1px;
    gap: 2px;
}

.tree .l5 {
    padding-left: 50px;
    gap: 3px;
}

.l1 { padding-left: 10px; }
.l2 { padding-left: 20px; }
.l3 { padding-left: 29px; }
.l4 { padding-left: 39px; }

/* status bar */
.status {
    flex: none;
    display: flex;
    align-items: center;
    height: 11px;
    background: #cbcbcb;
    border-top: 1px solid #b8b8b8;
}

.mode {
    width: 92px;
}

.status select {
    width: 97px;
    height: 9px;
    padding-left: 1px;
    background-color: #fff;
}

.status .sets {
    margin: 0 4px;
}

.count {
    width: 14px;
    padding-left: 1px;
}

.status svg + svg {
    margin-left: 6px;
}

.status .option {
    margin-left: 4px;
    color: #888;
}

.picks {
    display: flex;
    align-items: center;
    margin-left: auto;
    padding-right: 42px;
}

.picks button {
    width: 12px;
}
```
